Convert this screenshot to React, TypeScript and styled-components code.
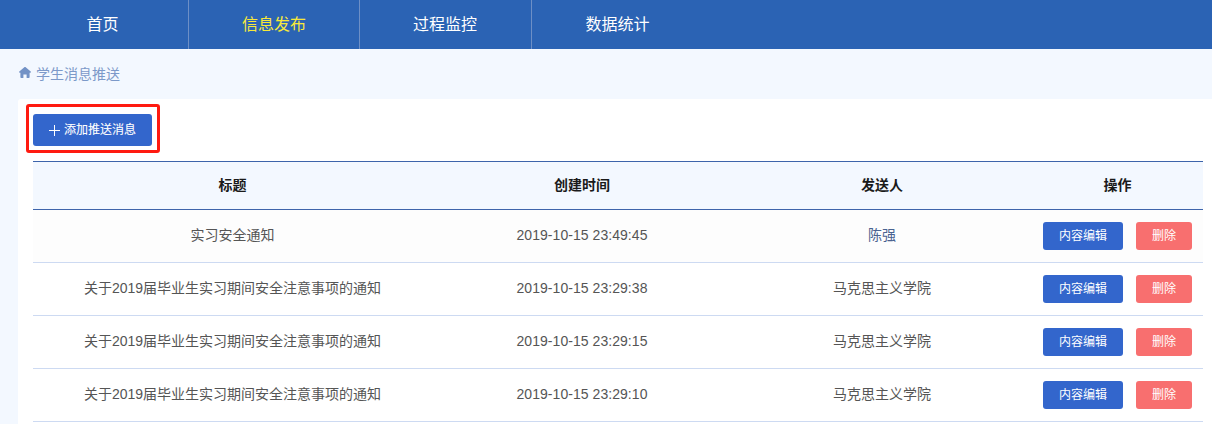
import React from "react";
import styled, { createGlobalStyle } from "styled-components";

const Global = createGlobalStyle`
  html, body { margin: 0; padding: 0; background: #f3f8ff; }
  body { font-family: "Liberation Sans", "Noto Sans CJK SC", sans-serif; overflow: hidden; }
  * { box-sizing: border-box; }
`;

const Page = styled.div`
  width: 1212px;
  height: 424px;
  overflow: hidden;
  display: flex;
  flex-direction: column;
`;

const Nav = styled.nav`
  height: 49px;
  flex: none;
  background: #2b63b4;
  display: flex;
  padding-left: 17px;
`;

const NavItem = styled.a<{ $active?: boolean; $w: number; $last?: boolean; $nudge?: number }>`
  width: ${(p) => p.$w}px;
  height: 49px;
  display: flex;
  align-items: center;
  justify-content: center;
  font-size: 16px;
  padding: 0 ${(p) => p.$nudge ?? 0}px 4px 0;
  color: ${(p) => (p.$active ? "#f7e83a" : "#ffffff")};
  border-right: ${(p) => (p.$last ? "none" : "1px solid #6d8fc6")};
`;

const Crumb = styled.div`
  height: 50px;
  flex: none;
  display: flex;
  align-items: center;
  gap: 5px;
  padding: 0 0 3px 19px;
  font-size: 14px;
  color: #7c99c9;
`;

const Panel = styled.main`
  position: relative;
  flex: 1;
  margin-left: 18px;
  padding: 15px 9px 0 15px;
  background: #fff;
  border-top-left-radius: 3px;
`;

const AddButton = styled.button`
  width: 119px;
  height: 32px;
  display: flex;
  align-items: center;
  justify-content: center;
  gap: 4px;
  padding: 0 0 3px 0;
  border: none;
  border-radius: 3px;
  background: #3366cc;
  color: #fff;
  font: inherit;
  font-size: 12px;
  -webkit-text-stroke: 0.1px #fff;

  svg {
    margin-top: 3px;
  }
`;

const Highlight = styled.div`
  position: absolute;
  left: 8px;
  top: 5px;
  width: 134px;
  height: 49px;
  border: 3px solid #ff1a10;
  border-radius: 3px;
  pointer-events: none;
`;

const Table = styled.div`
  margin-top: 15px;
`;

const Head = styled.div`
  display: grid;
  grid-template-columns: 399px 300px 300px 171px;
  height: 49px;
  background: #f3f8ff;
  border-top: 1px solid #3d64ab;
  border-bottom: 1px solid #3d64ab;
`;

const HeadCell = styled.div`
  display: flex;
  align-items: center;
  justify-content: center;
  padding-bottom: 4px;
  font-size: 14px;
  font-weight: 700;
  color: #1a1a1a;
`;

const Row = styled.div<{ $tint?: boolean }>`
  display: grid;
  grid-template-columns: 399px 300px 300px 171px;
  height: 53px;
  background: ${(p) => (p.$tint ? "#fdfdfd" : "#fff")};
  border-bottom: 1px solid #cddaf2;
`;

const Cell = styled.div<{ $blue?: boolean; $date?: boolean }>`
  display: flex;
  align-items: center;
  justify-content: center;
  padding-bottom: ${(p) => (p.$date ? 2 : 4)}px;
  font-size: 14px;
  letter-spacing: ${(p) => (p.$date ? "0.05px" : "0")};
  color: ${(p) => (p.$blue ? "#4a6390" : "#555")};
`;

const Actions = styled.div`
  display: flex;
  align-items: center;
  gap: 13px;
  padding-left: 11px;
`;

const RowButton = styled.button<{ $danger?: boolean }>`
  width: ${(p) => (p.$danger ? 56 : 80)}px;
  height: 28px;
  padding: 0 0 3px 0;
  border: none;
  border-radius: 3px;
  background: ${(p) => (p.$danger ? "#f86f6f" : "#3366cc")};
  color: #fff;
  font: inherit;
  font-size: 12px;
`;

const rows = [
  { t: "实习安全通知", d: "2019-10-15 23:49:45", s: "陈强", first: true },
  { t: "关于2019届毕业生实习期间安全注意事项的通知", d: "2019-10-15 23:29:38", s: "马克思主义学院" },
  { t: "关于2019届毕业生实习期间安全注意事项的通知", d: "2019-10-15 23:29:15", s: "马克思主义学院" },
  { t: "关于2019届毕业生实习期间安全注意事项的通知", d: "2019-10-15 23:29:10", s: "马克思主义学院" },
];

export default function App() {
  return (
    <Page>
      <Global />
      <Nav>
        <NavItem $w={172}>首页</NavItem>
        <NavItem $w={171} $active>信息发布</NavItem>
        <NavItem $w={172} $nudge={1}>过程监控</NavItem>
        <NavItem $w={172} $nudge={1} $last>数据统计</NavItem>
      </Nav>
      <Crumb>
        <svg width="12" height="11" viewBox="0 0 12 11" fill="#7292c6">
          <path d="M6 0 C6.3 0 6.5 .1 6.7 .3 L11.7 4.6 C12.1 5 11.9 5.7 11.3 5.7 H10.6 V10.2 C10.6 10.6 10.3 11 9.8 11 H7.6 V7.4 H4.4 V11 H2.2 C1.7 11 1.4 10.6 1.4 10.2 V5.7 H.7 C.1 5.7 -.1 5 .3 4.6 L5.3 .3 C5.5 .1 5.7 0 6 0 Z" />
        </svg>
        <span>学生消息推送</span>
      </Crumb>
      <Panel>
        <AddButton>
          <svg width="11" height="11" viewBox="0 0 11 11" stroke="#fff" strokeWidth="1" fill="none">
            <path d="M5.5 0 V11 M0 5.5 H11" />
          </svg>
          <span>添加推送消息</span>
        </AddButton>
        <Highlight />
        <Table>
          <Head>
            <HeadCell>标题</HeadCell>
            <HeadCell>创建时间</HeadCell>
            <HeadCell>发送人</HeadCell>
            <HeadCell>操作</HeadCell>
          </Head>
          {rows.map((r, i) => (
            <Row key={i} $tint={r.first}>
              <Cell>{r.t}</Cell>
              <Cell $date>{r.d}</Cell>
              <Cell $blue={r.first}>{r.s}</Cell>
              <Actions>
                <RowButton>内容编辑</RowButton>
                <RowButton $danger>删除</RowButton>
              </Actions>
            </Row>
          ))}
        </Table>
      </Panel>
    </Page>
  );
}
